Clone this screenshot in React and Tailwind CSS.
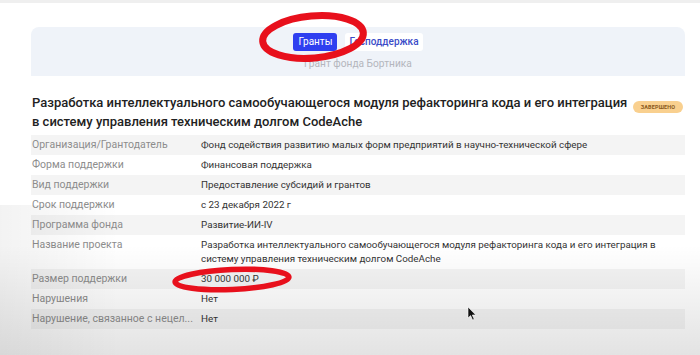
export default function App() {
  const rows = [
    ['Организация/Грантодатель', 'Фонд содействия развитию малых форм предприятий в научно-технической сфере'],
    ['Форма поддержки', 'Финансовая поддержка'],
    ['Вид поддержки', 'Предоставление субсидий и грантов'],
    ['Срок поддержки', 'с 23 декабря 2022 г'],
    ['Программа фонда', 'Развитие-ИИ-IV'],
    ['Название проекта', 'Разработка интеллектуального самообучающегося модуля рефакторинга кода и его интеграция в систему управления техническим долгом CodeAche'],
    ['Размер поддержки', '30 000 000 ₽'],
    ['Нарушения', 'Нет'],
    ['Нарушение, связанное с нецел...', 'Нет'],
  ]

  return (
    <div className="relative w-[700px] h-[355px] overflow-hidden bg-white font-['Roboto','Inter',sans-serif]">
      <div className="h-[3px] bg-[#efefef]" />

      <div className="pl-[31px] pr-[15px] pt-[24px]">
        {/* tabs panel */}
        <div className="h-[49px] rounded-t-lg bg-[#eff3f9] flex flex-col items-center pt-[6px]">
          <div className="flex items-center gap-2">
            <button className="h-[18px] px-[5px] rounded-[3px] bg-[#2f3ff0] text-white text-[10px] leading-[18px]">
              Гранты
            </button>
            <button className="h-[18px] px-[4px] rounded-[3px] bg-white text-[#3b4cc8] text-[10px] font-medium leading-[18px]">
              Господдержка
            </button>
          </div>
          <div className="mt-[5px] text-[10.2px] text-[#b4b6bd]">Грант фонда Бортника</div>
        </div>

        {/* title */}
        <div className="mt-[17px] flex items-start">
          <h2 className="w-[602px] shrink-0 pl-px text-[13px] leading-[19px] font-medium text-[#222]">
            Разработка интеллектуального самообучающегося модуля рефакторинга кода и его интеграция в систему управления техническим долгом CodeAche
          </h2>
          <span className="ml-auto mt-[8px] mr-[2px] h-[12px] w-[50px] rounded-full bg-[#f9d08f] text-[5.5px] font-bold leading-[12px] text-center text-[#8a5a1c] tracking-wide">
            ЗАВЕРШЕНО
          </span>
        </div>

        {/* details */}
        <div className="mt-[4px]">
          {rows.map(([label, value], i) => (
            <div
              key={i}
              className={`flex py-[3px] leading-[14px] ${i % 2 === 0 ? 'bg-[#f4f4f4]' : 'bg-white'}`}
            >
              <div className="w-[170px] shrink-0 pl-px text-[10.5px] text-[#8d8d8d] whitespace-nowrap">{label}</div>
              <div className="flex-1 pr-[24px] text-[9.8px] text-[#333]">{value}</div>
            </div>
          ))}
        </div>
      </div>

      {/* video vignette */}
      <div className="pointer-events-none absolute inset-x-0 bottom-0 h-[110px] bg-linear-to-b from-transparent to-black/[0.11]" />
      <div className="pointer-events-none absolute left-0 bottom-0 w-[120px] h-[150px] bg-linear-to-r from-black/[0.05] to-transparent" />

      {/* annotations */}
      <svg className="pointer-events-none absolute inset-0" width="700" height="355" viewBox="0 0 700 355">
        <ellipse cx="313" cy="37" rx="50.5" ry="21" fill="none" stroke="#e8101c" strokeWidth="7" transform="rotate(-5 313 37)" />
        <ellipse cx="232" cy="279.5" rx="57" ry="10" fill="none" stroke="#e8101c" strokeWidth="5.5" transform="rotate(-2.5 232 279.5)" />
        <path d="M468 307 L468 318 L470.6 315.6 L472.6 320 L474.2 319.3 L472.3 315 L475.8 315 Z" fill="#111" stroke="#fff" strokeWidth="0.6" />
      </svg>
    </div>
  )
}
